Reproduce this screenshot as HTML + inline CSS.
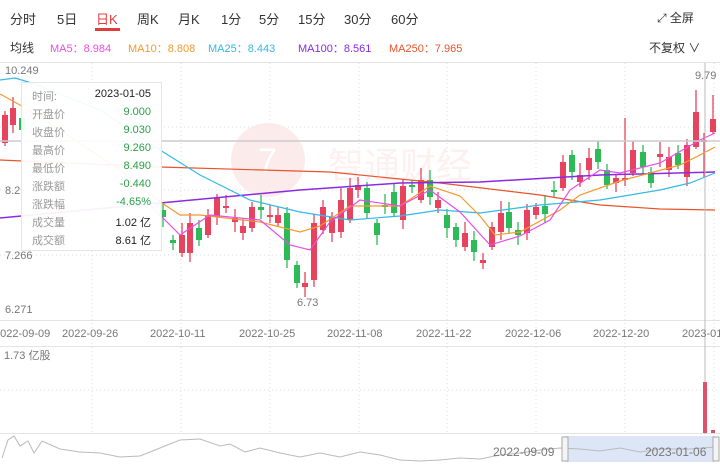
<!DOCTYPE html>
<html><head><meta charset="utf-8"><style>
body{margin:0;width:720px;height:464px;overflow:hidden;background:#fff;font-family:"Liberation Sans","Noto Sans CJK SC",sans-serif;position:relative}
.tab{position:absolute;top:9px;font-size:13px;color:#333}
.ma{position:absolute;top:40px;font-size:11px}
.tip{position:absolute;left:21px;top:82px;width:139px;height:167px;background:rgba(255,255,255,0.93);border:1px solid #e6e6e6;font-size:11px}
.tip div{position:absolute;left:10px;width:119px;height:18px}
.tip span{position:absolute;right:0;color:#222}
.tip .g{color:#2aa14a}
.tip b{font-weight:normal;color:#999}
</style></head><body>
<div class="tab" style="left:10px">分时</div>
<div class="tab" style="left:57px">5日</div>
<div class="tab" style="left:96px;color:#e03c3c">日K</div>
<div style="position:absolute;left:95px;top:28px;width:25px;height:3px;background:#e03c3c"></div>
<div class="tab" style="left:137px">周K</div>
<div class="tab" style="left:178px">月K</div>
<div class="tab" style="left:221px">1分</div>
<div class="tab" style="left:259px">5分</div>
<div class="tab" style="left:298px">15分</div>
<div class="tab" style="left:344px">30分</div>
<div class="tab" style="left:391px">60分</div>
<div class="tab" style="left:657px;font-size:12px">⤢ 全屏</div>
<div class="ma" style="left:10px;color:#333;font-size:12px;top:39px">均线</div>
<div class="ma" style="left:50px;color:#e84ee8">MA5：8.984</div>
<div class="ma" style="left:128px;color:#f39a2c">MA10：8.808</div>
<div class="ma" style="left:208px;color:#35b9e6">MA25：8.443</div>
<div class="ma" style="left:298px;color:#8a2be2">MA100：8.561</div>
<div class="ma" style="left:389px;color:#e8542b">MA250：7.965</div>
<div class="ma" style="left:649px;color:#333;font-size:12px;top:39px">不复权 ∨</div>
<svg id="s" width="720" height="464" style="position:absolute;left:0;top:0">
<line x1="0" y1="62.5" x2="720" y2="62.5" stroke="#e4e4e4"/>
<g stroke="#ddd" stroke-dasharray="1,3">
<line x1="0" y1="127" x2="720" y2="127"/><line x1="0" y1="190" x2="720" y2="190"/><line x1="0" y1="255" x2="720" y2="255"/>
<line x1="0" y1="390" x2="720" y2="390"/>
</g>
<g id="vg" stroke="#ddd" stroke-dasharray="1,3"></g>
<line x1="0" y1="320.5" x2="720" y2="320.5" stroke="#e4e4e4"/>
<line x1="0" y1="346.5" x2="720" y2="346.5" stroke="#e4e4e4"/>
<line x1="0" y1="433.5" x2="720" y2="433.5" stroke="#e4e4e4"/>
<circle cx="268" cy="160" r="37" fill="#fcebeb"/>
<text x="258" y="172" font-size="34" fill="#fff" font-family="Liberation Sans">7</text>
<text x="328" y="178" font-size="36" fill="#fdf0f0" font-family="Noto Sans CJK SC">智通财经</text>
<g id="c"></g>
<g fill="none" stroke-width="1.2">
<polyline stroke="#e8542b" points="0,160 160,167 330,172 440,183 540,195 600,205 660,209 715,210"/>
<polyline stroke="#8a2be2" stroke-width="1.5" points="0,218 160,203 300,190 400,183 480,182 600,175 715,172"/>
<polyline stroke="#35b9e6" points="0,80 15,78 35,84 100,110 160,150 200,175 250,200 300,212 350,220 400,216 440,210 480,213 540,205 600,200 660,190 690,183 715,173"/>
<polyline stroke="#f39a2c" points="0,94 20,105 60,130 120,170 150,195 180,215 200,215 260,222 300,232 320,226 350,206 400,206 430,186 460,196 480,216 495,235 520,232 560,210 580,195 620,181 680,165 700,155 715,147"/>
<polyline stroke="#e84ee8" points="150,205 180,235 210,215 260,220 290,245 310,250 330,222 360,200 400,206 430,190 460,212 490,245 520,236 550,220 570,190 600,170 620,173 660,163 700,140 715,133"/>
</g>
<line x1="0" y1="141" x2="720" y2="141" stroke="#ccc" stroke-width="1.5"/>
<line x1="705" y1="63" x2="705" y2="434" stroke="#bbb"/>
<rect x="703" y="382" width="4" height="51" fill="#e0506b"/>
<rect x="711" y="430" width="4" height="3" fill="#e0506b"/>
<rect x="565" y="436" width="150" height="26" fill="#dde6f6"/>
<polyline fill="none" stroke="#bbb" points="2,458 8,440 14,436 20,446 28,441 34,453 42,441 60,449 80,452 100,453 120,457 140,456 160,448 180,440 200,439 220,446 230,444 245,452 260,448 280,453 300,457 320,453 340,457 360,452 380,455 400,460 420,461 440,460 460,458 480,459 500,455 520,453 540,450 560,448 580,449 600,451 620,448 640,452 660,449 690,449 715,447"/>
<rect x="562" y="437" width="6" height="24" fill="#f4f4f4" stroke="#aaa"/>
<rect x="713" y="437" width="6" height="24" fill="#f4f4f4" stroke="#aaa"/>
<g font-size="11" fill="#777" font-family="Liberation Sans">
<text x="5" y="74">10.249</text>
<text x="5" y="194">8.2</text>
<text x="5" y="259">7.266</text>
<text x="5" y="313">6.271</text>
<text x="695" y="79">9.79</text>
<text x="297" y="306">6.73</text>
<text x="4" y="359">1.73 亿股</text>
<text x="-6" y="337">2022-09-09</text>
<text x="62" y="337">2022-09-26</text>
<text x="150" y="337">2022-10-11</text>
<text x="239" y="337">2022-10-25</text>
<text x="327" y="337">2022-11-08</text>
<text x="416" y="337">2022-11-22</text>
<text x="505" y="337">2022-12-06</text>
<text x="593" y="337">2022-12-20</text>
<text x="682" y="337">2023-01-05</text>
<text x="493" y="456" font-size="12">2022-09-09</text>
<text x="645" y="456" font-size="12">2023-01-06</text>
</g>
</svg>
<div class="tip">
<div style="top:5px"><b>时间:</b><span>2023-01-05</span></div>
<div style="top:23px"><b>开盘价</b><span class="g">9.000</span></div>
<div style="top:41px"><b>收盘价</b><span class="g">9.030</span></div>
<div style="top:59px"><b>最高价</b><span class="g">9.260</span></div>
<div style="top:77px"><b>最低价</b><span class="g">8.490</span></div>
<div style="top:95px"><b>涨跌额</b><span class="g">-0.440</span></div>
<div style="top:113px"><b>涨跌幅</b><span class="g">-4.65%</span></div>
<div style="top:131px"><b>成交量</b><span>1.02 亿</span></div>
<div style="top:149px"><b>成交额</b><span>8.61 亿</span></div>
</div>
<script>
var NS="http://www.w3.org/2000/svg";
var vg=document.getElementById("vg");
[92,181,270,359,447,536,625,714].forEach(function(x){var l=document.createElementNS(NS,"line");l.setAttribute("x1",x);l.setAttribute("x2",x);l.setAttribute("y1",63);l.setAttribute("y2",434);vg.appendChild(l);});
var d=[[5,115,143,"r"],[13,108,125,"r"],[22,118,130,"g"],[163,210,217,"g"],[173,240,243,"g"],[182,235,253,"r"],[190,223,253,"r"],[199,228,240,"g"],[208,215,235,"r"],[217,198,217,"r"],[226,206,208,"r"],[235,218,222,"r"],[243,226,233,"r"],[252,207,228,"r"],[261,207,210,"g"],[270,215,217,"r"],[278,215,223,"r"],[287,213,260,"g"],[297,265,283,"g"],[305,283,287,"r"],[314,223,280,"r"],[323,207,230,"r"],[332,217,233,"r"],[341,200,232,"r"],[350,188,220,"r"],[358,185,190,"r"],[367,188,213,"g"],[377,223,235,"g"],[385,205,207,"g"],[394,192,213,"g"],[403,186,220,"r"],[412,185,187,"g"],[421,180,200,"r"],[430,180,197,"g"],[438,200,208,"r"],[447,215,228,"g"],[456,227,240,"g"],[465,233,247,"r"],[474,240,252,"g"],[483,260,263,"r"],[492,227,247,"r"],[501,213,232,"r"],[509,212,228,"g"],[518,230,235,"g"],[527,210,233,"r"],[536,207,215,"r"],[545,206,214,"g"],[554,190,192,"g"],[563,162,188,"r"],[572,155,172,"g"],[580,175,182,"r"],[589,158,170,"r"],[598,149,162,"g"],[607,170,185,"g"],[616,178,183,"r"],[625,178,180,"r"],[633,150,173,"r"],[643,152,167,"g"],[651,172,183,"g"],[660,154,157,"r"],[669,157,170,"r"],[678,153,165,"g"],[687,145,177,"r"],[696,112,147,"r"],[704,140,142,"r"],[713,119,132,"r"]];
var c=document.getElementById("c"),s="";
d.forEach(function(a,i){var col=a[3]=="r"?"#e8435e":"#2dbb57";var w1=4+(i*7%9),w2=3+(i*5%8);
if(a[0]==625){w1=60;w2=6}if(a[0]==696){w1=22;w2=2}if(a[0]==713){w1=24;w2=2}if(a[0]==704){w1=7;w2=35}
s+='<line x1="'+a[0]+'" x2="'+a[0]+'" y1="'+(a[1]-w1)+'" y2="'+(a[2]+w2)+'" stroke="'+col+'" stroke-width="1.3"/>';
s+='<rect x="'+(a[0]-3)+'" y="'+a[1]+'" width="6" height="'+Math.max(2,a[2]-a[1])+'" fill="'+col+'"/>';});
c.innerHTML=s;
</script>
</body></html>
